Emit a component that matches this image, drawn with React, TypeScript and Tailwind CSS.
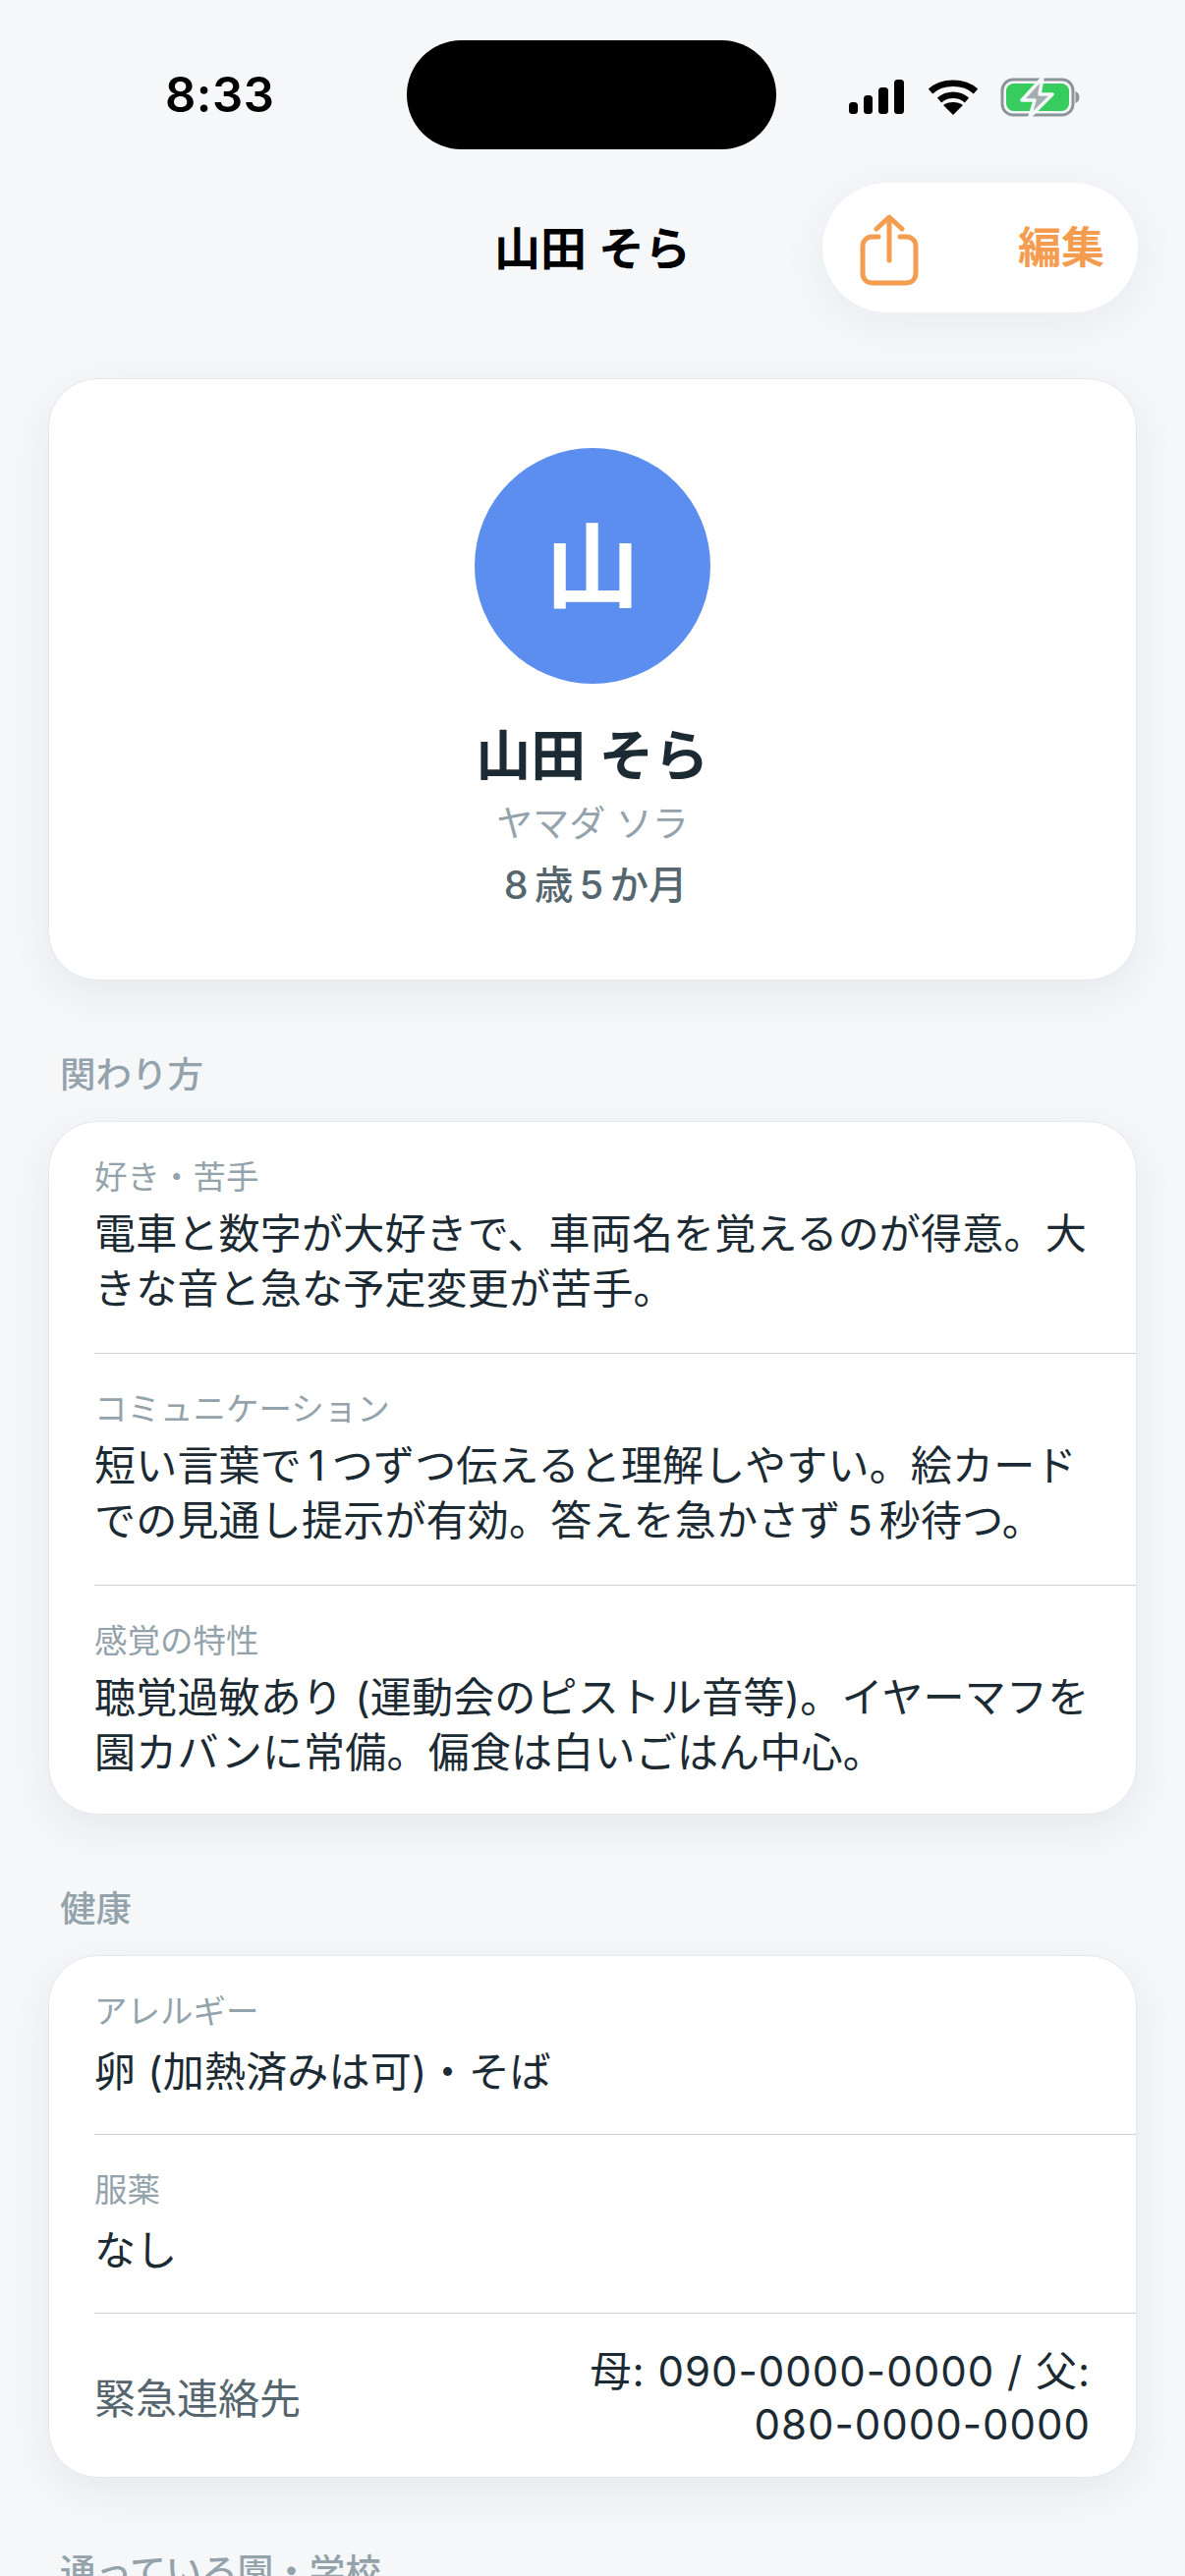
import type { ReactNode } from 'react';

const font = 'font-["Inter","Noto_Sans_CJK_JP",sans-serif]';

const StatusIcons = () => (
  <div className="flex items-center gap-[22px]">
    <svg width="60" height="38" viewBox="0 0 60 38" fill="#000">
      <rect x="2" y="24" width="9" height="12" rx="3.5" />
      <rect x="17" y="17" width="9" height="19" rx="3.5" />
      <rect x="32" y="9" width="10" height="27" rx="3.5" />
      <rect x="48" y="1" width="10" height="35" rx="3.5" />
    </svg>
    <svg width="52" height="38" viewBox="0 0 52 38" fill="none">
      <path d="M3 13C15 2 37 2 49 13" stroke="#000" strokeWidth="6.5" />
      <path d="M12 22C20 15 32 15 40 22" stroke="#000" strokeWidth="6.5" />
      <path d="M16 27C21 23 31 23 36 27L26 37Z" fill="#000" />
    </svg>
    <svg width="82" height="42" viewBox="0 0 82 42" fill="none">
      <rect x="2" y="3" width="72" height="36" rx="11" stroke="#8c9599" strokeWidth="3" />
      <rect x="6" y="7" width="64" height="28" rx="7.5" fill="#37cd5e" />
      <path d="M76.500 15C79.500 16 80.500 18.500 80.500 21C80.500 23.500 79.500 26 76.500 27Z" fill="#8c9599" />
      <path d="M43 1L22 24H35L30 41L53 18H40Z" fill="#a5adb1" stroke="#f5f7f9" strokeWidth="3.5" strokeLinejoin="round" />
    </svg>
  </div>
);

const ShareIcon = () => (
  <svg className="mt-[5px]" width="60" height="74" viewBox="0 0 60 74" fill="none" stroke="#f49d51" strokeWidth="5" strokeLinecap="round" strokeLinejoin="round">
    <path d="M30 4V47" />
    <path d="M17 15L30 3L43 15" />
    <path d="M19 23H13C7 23 3 27 3 33V60C3 66 7 70 13 70H47C53 70 57 66 57 60V33C57 27 53 23 47 23H41" />
  </svg>
);

// digits next to kana get extra air in the screenshot
const Num = ({ children }: { children: ReactNode }) => <span className="mx-[0.16em]">{children}</span>;

const Section = ({ title, children }: { title: string; children: ReactNode }) => (
  <section className="mt-[71px]">
    <h2 className="ml-[12px] text-[36.5px] leading-[50px] font-medium text-[#94a3ab]">{title}</h2>
    <div className="mt-[22px] overflow-hidden rounded-[50px] border border-[#e4e8eb] bg-white shadow-[0_14px_44px_rgba(40,55,70,0.07)]">{children}</div>
  </section>
);

const StackRow = ({ label, children, short, last }: { label: string; children: ReactNode; short?: boolean; last?: boolean }) => (
  <div className="pl-[46px]">
    <div className={`pr-[46px] pt-[33px] ${last ? 'pb-[34px]' : 'border-b border-[#cdd1d4]'} ${last ? '' : short ? 'pb-[35px]' : 'pb-[37px]'}`}>
      <div className="text-[33.5px] leading-[46px] text-[#94a3ab]">{label}</div>
      <p className={`${short ? 'mt-[11px]' : 'mt-[7px]'} text-[42px] leading-[56px] tracking-[0.2px] text-[#1c2b33]`}>{children}</p>
    </div>
  </div>
);

export default function App() {
  return (
    <div className={`h-[2622px] overflow-hidden bg-[#f5f7f9] ${font}`}>
      <div className="flex h-[153px] items-start pt-[41px] pl-[168px] pr-[106px]">
        <div className="mt-[27px] w-[110px] text-[49px] leading-[58px] font-semibold tracking-[0.5px] text-black">8:33</div>
        <div className="ml-[136px] h-[111px] w-[376px] rounded-[56px] bg-black" />
        <div className="ml-auto mt-[37px]">
          <StatusIcons />
        </div>
      </div>

      <header className="mt-[33px] grid h-[132px] grid-cols-[1fr_auto_1fr] items-center">
        <div />
        <h1 className="mt-[2px] text-[47px] leading-[60px] font-semibold text-black">山田 そら</h1>
        <div className="flex justify-end pr-[48px]">
          <div className="flex h-[132px] w-[321px] items-center justify-between rounded-[66px] bg-white pl-[38px] pr-[34px] shadow-[0_10px_50px_rgba(40,50,60,0.06)]">
            <ShareIcon />
            <span className="text-[44px] font-bold text-[#f49d51]">編集</span>
          </div>
        </div>
      </header>

      <main className="mt-[67px] px-[49px]">
        <div className="flex h-[613px] flex-col items-center rounded-[50px] border border-[#e4e8eb] bg-white pt-[70px] shadow-[0_14px_44px_rgba(40,55,70,0.07)]">
          <div className="flex h-[240px] w-[240px] items-center justify-center rounded-full bg-[#5b8eee] text-[96px] font-semibold text-white">山</div>
          <div className="mt-[36px] text-[56px] leading-[74px] font-bold text-[#1c2b33]">山田 そら</div>
          <div className="mt-[8px] text-[37px] leading-[50px] text-[#94a3ab]">ヤマダ ソラ</div>
          <div className="mt-[12px] text-[39.5px] leading-[50px] font-medium text-[#56666f]">
            <Num>8</Num>歳<Num>5</Num>か月
          </div>
        </div>

        <Section title="関わり方">
          <StackRow label="好き・苦手">電車と数字が大好きで、車両名を覚えるのが得意。大きな音と急な予定変更が苦手。</StackRow>
          <StackRow label="コミュニケーション">短い言葉で<Num>1</Num>つずつ伝えると理解しやすい。絵カードでの見通し提示が有効。答えを急かさず<Num>5</Num>秒待つ。</StackRow>
          <StackRow label="感覚の特性" last>聴覚過敏あり (運動会のピストル音等)。イヤーマフを園カバンに常備。偏食は白いごはん中心。</StackRow>
        </Section>
        <Section title="健康">
          <StackRow label="アレルギー" short>卵 (加熱済みは可)・そば</StackRow>
          <StackRow label="服薬" short>なし</StackRow>
          <div className="flex items-center justify-between pt-[32px] pr-[46px] pb-[26px] pl-[46px]">
            <span className="shrink-0 text-[42px] text-[#56666f]">緊急連絡先</span>
            <p className="w-[540px] text-right text-[42px] leading-[54px] tracking-[1px] text-[#1c2b33]">母: 090-0000-0000 / 父: 080-0000-0000</p>
          </div>
        </Section>
        <Section title="通っている園・学校">
          <div className="h-[300px]" />
        </Section>
      </main>
    </div>
  );
}
